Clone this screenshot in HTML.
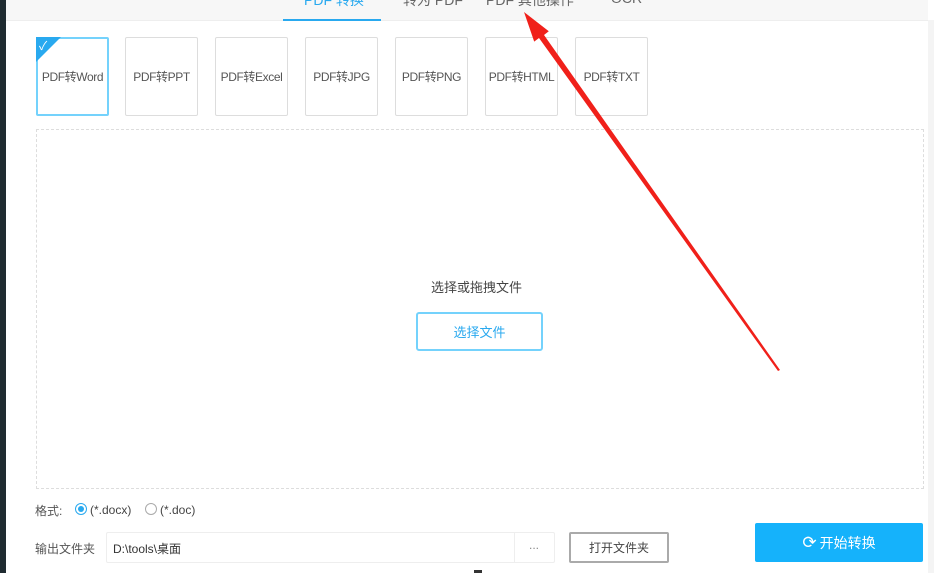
<!DOCTYPE html>
<html><head><meta charset="utf-8"><style>
*{box-sizing:border-box;margin:0;padding:0}
body{width:934px;height:573px;overflow:hidden;background:#fff;font-family:"Liberation Sans","Noto Sans CJK SC",sans-serif;position:relative;color:#555}
.abs{position:absolute}
.tabbar{left:6px;top:0;width:922px;height:21px;background:#f7f7f7;border-bottom:1px solid #eee}
.tab{top:-10px;font-size:14px;color:#666;white-space:nowrap}
.card{top:37px;width:73px;height:79px;border:1.5px solid #ddd;border-radius:2px;font-size:12px;color:#555;display:flex;align-items:center;justify-content:center;white-space:nowrap;letter-spacing:-0.4px}
.sel{border:2px solid #74d2fc}
</style></head><body>
<div class="abs" style="left:0;top:0;width:6px;height:573px;background:#1f2b31"></div>
<div class="abs" style="left:928px;top:20px;width:6px;height:553px;background:#f4f4f4"></div>
<div class="abs tabbar"></div>
<div class="abs tab" style="left:304px;color:#29a9ef">PDF 转换</div>
<div class="abs" style="left:283px;top:19px;width:98px;height:2px;background:#29a9ef"></div>
<div class="abs tab" style="left:403px">转为 PDF</div>
<div class="abs tab" style="left:486px">PDF 其他操作</div>
<div class="abs tab" style="left:611px">OCR</div>

<div class="abs card sel" style="left:36px">PDF转Word</div>
<div class="abs" style="left:36px;top:37px;width:0;height:0;border-top:25px solid #29a9ef;border-right:25px solid transparent"></div>
<div class="abs" style="left:39px;top:37px;color:#fff;font-size:12px">✓</div>
<div class="abs card" style="left:125px">PDF转PPT</div>
<div class="abs card" style="left:215px">PDF转Excel</div>
<div class="abs card" style="left:305px">PDF转JPG</div>
<div class="abs card" style="left:395px">PDF转PNG</div>
<div class="abs card" style="left:485px">PDF转HTML</div>
<div class="abs card" style="left:575px">PDF转TXT</div>

<div class="abs" style="left:36px;top:129px;width:888px;height:360px;border:1px dashed #ddd"></div>
<div class="abs" style="left:431px;top:277px;font-size:13px;color:#444">选择或拖拽文件</div>
<div class="abs" style="left:416px;top:312px;width:127px;height:39px;border:2px solid #74d2fc;border-radius:3px;color:#29a9ef;font-size:13px;display:flex;align-items:center;justify-content:center">选择文件</div>

<div class="abs" style="left:35px;top:502px;font-size:12px;color:#555">格式:</div>
<div class="abs" style="left:75px;top:503px;width:12px;height:12px;border:1px solid #29a9ef;border-radius:50%"></div>
<div class="abs" style="left:78px;top:506px;width:6px;height:6px;background:#29a9ef;border-radius:50%"></div>
<div class="abs" style="left:90px;top:503px;font-size:12px;color:#444">(*.docx)</div>
<div class="abs" style="left:145px;top:503px;width:12px;height:12px;border:1px solid #aaa;border-radius:50%"></div>
<div class="abs" style="left:160px;top:503px;font-size:12px;color:#444">(*.doc)</div>

<div class="abs" style="left:35px;top:540px;font-size:12px;color:#555">输出文件夹</div>
<div class="abs" style="left:106px;top:532px;width:449px;height:31px;border:1px solid #eee;border-radius:2px"></div>
<div class="abs" style="left:514px;top:532px;width:1px;height:31px;background:#eee"></div>
<div class="abs" style="left:113px;top:540px;font-size:12px;color:#333">D:\tools\桌面</div>
<div class="abs" style="left:529px;top:538px;font-size:12px;color:#888">...</div>
<div class="abs" style="left:569px;top:532px;width:100px;height:31px;border:2px solid #aaa;border-radius:2px;font-size:12px;color:#444;display:flex;align-items:center;justify-content:center">打开文件夹</div>
<div class="abs" style="left:755px;top:523px;width:168px;height:39px;background:#15b2fb;border-radius:2px;color:#fff;font-size:14px;display:flex;align-items:center;justify-content:center"><span style="font-size:17px;margin-right:3px">⟳</span>开始转换</div>
<div class="abs" style="left:474px;top:570px;width:8px;height:3px;background:#333"></div>

<svg class="abs" style="left:0;top:0" width="934" height="573"><polygon points="524,12 548.8,31.2 544,35 780,370 778,371 539,38 534.2,41.6" fill="#f0201a"/></svg>
</body></html>
